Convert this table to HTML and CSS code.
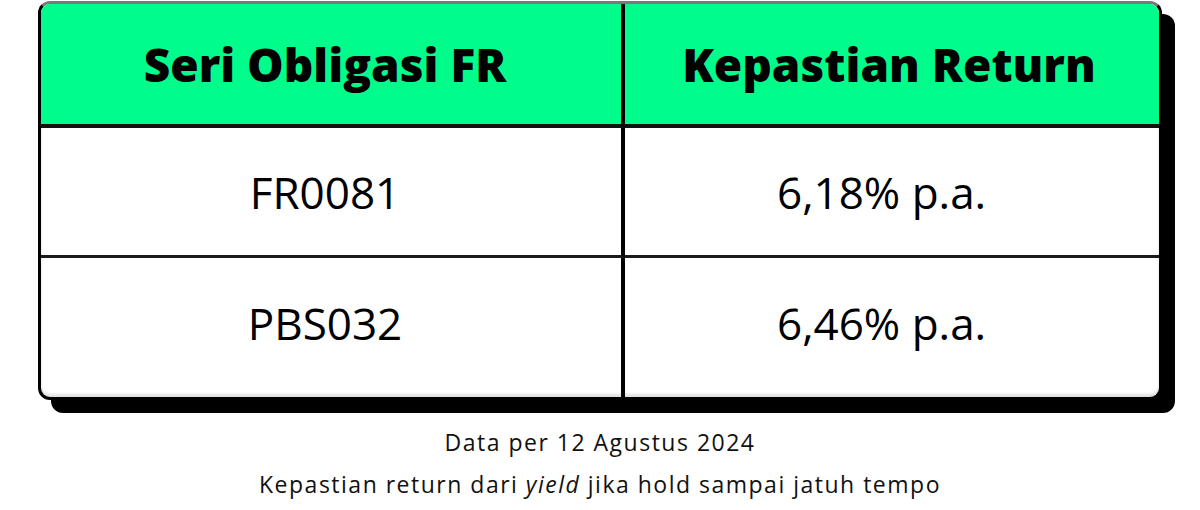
FILE: index.html
```html
<!DOCTYPE html>
<html lang="id">
<head>
<meta charset="utf-8">
<title>Seri Obligasi FR</title>
<link rel="stylesheet" href="styles.css">
</head>
<body>
<div class="page">
  <div class="table">
    <div class="cell head left">Seri Obligasi FR</div>
    <div class="cell head right">Kepastian Return</div>
    <div class="cell row1 left">FR0081</div>
    <div class="cell row1 right value">6,18% p.a.</div>
    <div class="cell row2 left">PBS032</div>
    <div class="cell row2 right value">6,46% p.a.</div>
  </div>
  <div class="notes">
    <p class="note">Data per 12 Agustus 2024</p>
    <p class="note">Kepastian return dari <em>yield</em> jika hold sampai jatuh tempo</p>
  </div>
</div>
</body>
</html>
```

FILE: styles.css
```css
* { box-sizing: border-box; }
html, body { margin: 0; padding: 0; background: #fff; }
body { font-family: "Open Sans", "Liberation Sans", sans-serif; color: #000; }

.page {
  width: 1200px;
  padding: 1px 38px 0 38px;
}

.table {
  display: grid;
  grid-template-columns: 584px 1fr;
  grid-template-rows: 124px 130px 139px;
  border: 3px solid #000;
  border-top-color: #7a7a7a;
  border-radius: 12px;
  box-shadow: 13px 13px 0 #000, inset 0 -3px 3px rgba(0,0,0,0.12);
  overflow: hidden;
  background: #fff;
}

.cell {
  display: flex;
  align-items: center;
  justify-content: center;
}

.left { border-right: 4px solid #000; padding-right: 12px; }
.right { padding-right: 6px; }

.head {
  background: #00fd8b;
  border-bottom: 4px solid #111;
  font-weight: 800;
  font-size: 46px;
  letter-spacing: 0;
}

.row1, .row2 {
  font-size: 44px;
  font-weight: 400;
}

.value {
  justify-content: flex-start;
  padding-left: 152px;
}

.row1 { border-bottom: 3px solid #1a1a1a; }
.row2 { padding-bottom: 10px; }

.notes {
  margin-top: 21px;
  text-align: center;
}

.note {
  margin: 0;
  font-size: 23px;
  line-height: 42px;
  letter-spacing: 1.5px;
  color: #111;
}

.note em { font-style: italic; }
```
